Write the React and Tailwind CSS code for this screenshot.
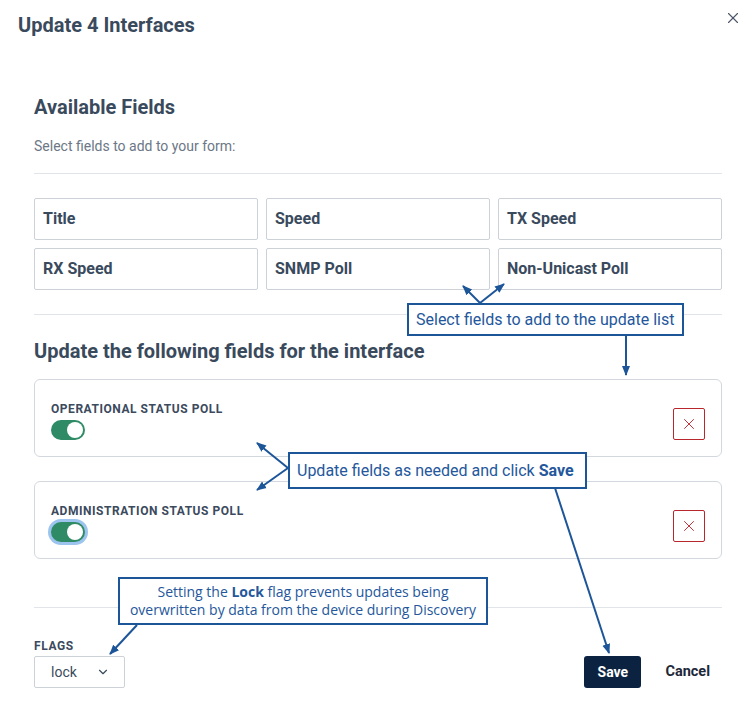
import React from 'react';
import { X, ChevronDown } from 'lucide-react';

const fields = ['Title', 'Speed', 'TX Speed', 'RX Speed', 'SNMP Poll', 'Non-Unicast Poll'];

function Toggle({ focused }) {
  return (
    <div className={`w-[34px] h-[20px] rounded-full bg-[#2e8b65] flex items-center justify-end px-[2px] ${focused ? 'ring-[3px] ring-[#9cc4ee]' : ''}`}>
      <div className="w-[16px] h-[16px] rounded-full bg-white" />
    </div>
  );
}

function FieldCard({ label, focused }) {
  return (
    <div className="border border-[#d3d8de] rounded-[6px] h-[78px] pl-[16px] pr-[16px] pt-[22px] pb-[16px] flex items-end justify-between">
      <div className="flex flex-col gap-[4px]">
        <div className="text-[12px] leading-[14px] font-bold tracking-[0.045em] text-[#3b4a5d]">{label}</div>
        <Toggle focused={focused} />
      </div>
      <button className="w-[32px] h-[32px] border border-[#b8262e] rounded-[2px] flex items-center justify-center">
        <X className="w-[18px] h-[18px] text-[#c0262e]" strokeWidth={1.25} />
      </button>
    </div>
  );
}

function Callout({ className, children }) {
  return (
    <div className={`absolute bg-white border-2 border-[#1d5599] text-[#24579c] ${className}`}>
      {children}
    </div>
  );
}

export default function App() {
  const blue = '#1d5599';
  return (
    <div className="relative w-[754px] h-[722px] bg-white overflow-hidden font-['Roboto',sans-serif] text-[#3a4a5d]">
      <div className="flex items-start justify-between pl-[18px] pr-[12px] pt-[12px]">
        <h2 className="text-[20px] leading-[26px] font-bold text-[#3a4a5d]">Update 4 Interfaces</h2>
        <X className="w-[18px] h-[18px] text-[#4a5668] mt-[-3px]" strokeWidth={1.5} />
      </div>

      <div className="pl-[34px] pr-[32px]">
        <h3 className="mt-[55px] text-[20px] leading-[28px] font-bold">Available Fields</h3>
        <p className="mt-[15px] text-[14px] leading-[20px] text-[#6b7786]">Select fields to add to your form:</p>
        <div className="mt-[17px] border-t border-[#e1e4e8]" />

        <div className="mt-[24px] grid grid-cols-3 gap-[8px]">
          {fields.map((f) => (
            <div key={f} className="h-[42px] border border-[#cdd2d9] rounded-[2px] flex items-center pl-[8px] text-[16px] font-bold text-[#3a4a5d]">
              {f}
            </div>
          ))}
        </div>
        <div className="mt-[24px] border-t border-[#e1e4e8]" />

        <h3 className="mt-[23px] text-[20px] leading-[26px] font-bold">Update the following fields for the interface</h3>

        <div className="mt-[15px] flex flex-col gap-[24px]">
          <FieldCard label="OPERATIONAL STATUS POLL" />
          <FieldCard label="ADMINISTRATION STATUS POLL" focused />
        </div>

        <div className="mt-[48px] border-t border-[#e1e4e8]" />

        <div className="mt-[30px] flex items-end justify-between">
          <div>
            <div className="text-[12px] leading-[16px] font-bold tracking-[0.05em] text-[#3b4a5d]">FLAGS</div>
            <div className="mt-[2px] w-[91px] h-[32px] border border-[#cdd2d9] rounded-[2px] flex items-center justify-between pl-[16px] pr-[14px]">
              <span className="text-[14px] text-[#3a4a5d]">lock</span>
              <ChevronDown className="w-[14px] h-[14px] text-[#3a4a5d]" strokeWidth={2} />
            </div>
          </div>
          <div className="flex items-center gap-[24px] pr-[12px]">
            <button className="w-[57px] h-[32px] bg-[#0b2341] rounded-[3px] text-white text-[14px] font-bold">Save</button>
            <button className="text-[14.5px] font-bold text-[#1d2939]">Cancel</button>
          </div>
        </div>
      </div>

      {/* annotation arrows */}
      <svg className="absolute inset-0 pointer-events-none" width="754" height="722">
        <defs>
          <marker id="ah" markerWidth="10" markerHeight="10" refX="9" refY="5" orient="auto" markerUnits="userSpaceOnUse">
            <path d="M0,1 L10,5 L0,9 z" fill={blue} />
          </marker>
        </defs>
        <g stroke={blue} strokeWidth="2" fill="none">
          <line x1="480" y1="303" x2="463" y2="286" markerEnd="url(#ah)" />
          <line x1="480" y1="303" x2="504" y2="284" markerEnd="url(#ah)" />
          <line x1="626" y1="336" x2="626" y2="375" markerEnd="url(#ah)" />
          <line x1="288" y1="468" x2="257" y2="443" markerEnd="url(#ah)" />
          <line x1="288" y1="468" x2="257" y2="490" markerEnd="url(#ah)" />
          <line x1="555" y1="488" x2="609" y2="653" markerEnd="url(#ah)" />
          <line x1="137" y1="625" x2="110" y2="654" markerEnd="url(#ah)" />
        </g>
      </svg>

      <Callout className="left-[407px] top-[303px] w-[277px] h-[33px] flex items-center pl-[7px] text-[16px]">
        Select fields to add to the update list
      </Callout>
      <Callout className="left-[288px] top-[452px] w-[299px] h-[37px] flex items-center pl-[7px] text-[16px]">
        <span>Update fields as needed and click <b className="font-bold">Save</b></span>
      </Callout>
      <Callout className="left-[118px] top-[577px] w-[370px] h-[48px] flex items-center justify-center text-center text-[14px] leading-[18px] font-['Open_Sans',sans-serif]">
        <span>Setting the <b className="font-bold">Lock</b> flag prevents updates being<br />overwritten by data from the device during Discovery</span>
      </Callout>
    </div>
  );
}
